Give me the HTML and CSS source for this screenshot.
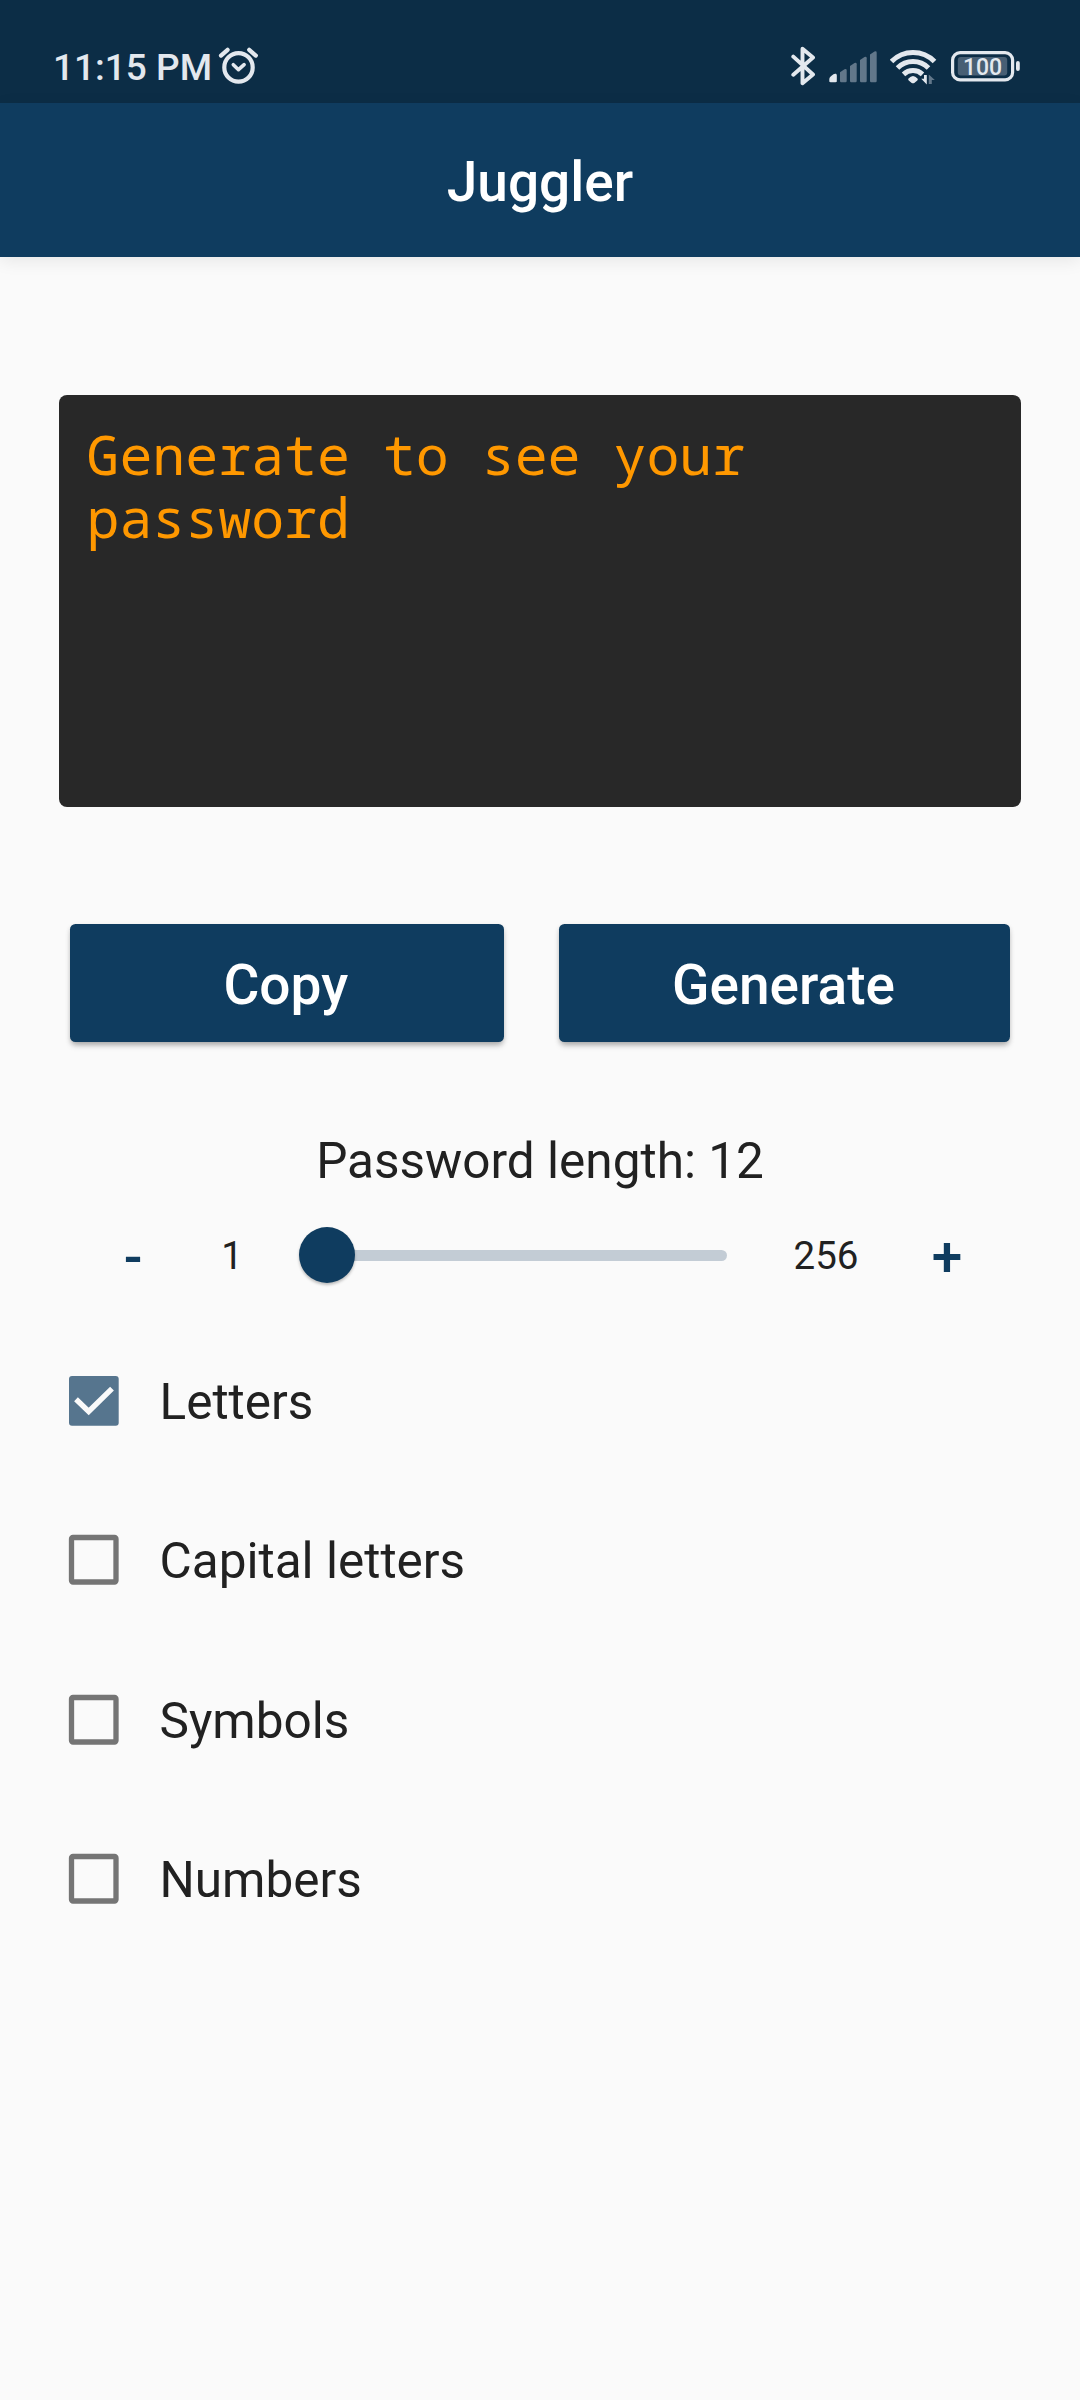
FILE: index.html
```html
<!DOCTYPE html>
<html lang="en">
<head>
<meta charset="utf-8">
<title>Juggler</title>
<link rel="stylesheet" href="styles.css">
</head>
<body>
<div class="status-bar">
  <div class="status-left">
    <span class="clock">11:15 PM</span>
    <svg class="icon" width="40" height="40" viewBox="0 0 40 40">
      <circle cx="20.500" cy="21.400" r="14.200" fill="none" stroke="#e3e8ee" stroke-width="4.200"/>
      <path d="M15.300 18.700l5.200 5 5.600-5" fill="none" stroke="#e3e8ee" stroke-width="3.600" stroke-linecap="round" stroke-linejoin="round"/>
      <path d="M3 9.600l6.600-5.800M31.200 3.800l6.600 5.800" fill="none" stroke="#e3e8ee" stroke-width="4.200" stroke-linecap="round"/>
    </svg>
  </div>
  <div class="status-right">
    <svg class="icon" width="26" height="40" viewBox="0 0 26 40">
      <path d="M2.300 10.600L22 28.500 11.500 37.200V2.800l10.500 8.700L2.300 28.700" fill="none" stroke="#e3e8ee" stroke-width="3.900" stroke-linecap="round" stroke-linejoin="round"/>
    </svg>
    <svg class="icon signal" width="49" height="40" viewBox="0 0 49 40">
      <path d="M.3 35v-2c0-2 4-5 5.800-5.200 1.200-.1 1.700.4 1.700 1.600V35c0 .8-.4 1.200-1.200 1.200H1.500C.7 36.200.3 35.800.3 35z" fill="#e3e8ee"/>
      <g fill="#62778a">
        <path d="M11 26.200l4.500-2.900q2.200-.8 2.200 1.200v10.500q0 1.200-1.200 1.200h-4.300q-1.200 0-1.200-1.200z"/>
        <path d="M21 20l4.500-2.900q2.200-.8 2.200 1.200v16.700q0 1.200-1.200 1.200h-4.300q-1.200 0-1.200-1.200z"/>
        <path d="M31 14l4.500-2.900q2.200-.8 2.200 1.200v22.700q0 1.200-1.200 1.200h-4.300q-1.200 0-1.200-1.200z"/>
        <path d="M41 8.500l4.500-2.900q2.200-.8 2.200 1.200v28.200q0 1.200-1.200 1.200h-4.300q-1.200 0-1.200-1.200z"/>
      </g>
    </svg>
    <svg class="icon wifi" width="48" height="40" viewBox="0 0 48 40">
      <g fill="none" stroke="#e3e8ee" stroke-width="5">
        <path d="M1.500 15.500a30 30 0 0 1 43 0"/>
        <path d="M7.500 22a22 22 0 0 1 31 0"/>
        <path d="M13.500 28.300a14 14 0 0 1 19 0"/>
      </g>
      <path d="M18.500 32.500q4.500-5 9 0 .8 1-.2 2l-3 2.400q-1.300.8-2.600 0l-3-2.400q-1-1-.2-2z" fill="#e3e8ee"/>
      <path d="M36.800 29v9.600l-5.600-5.800h2.800V29z" fill="#e3e8ee"/>
      <path d="M38.800 38V28.500l6 5.500h-3v4z" fill="#62778a"/>
    </svg>
    <svg class="icon battery" width="70" height="40" viewBox="0 0 70 40">
      <rect x="1.600" y="6.600" width="60" height="27.300" rx="7.500" fill="none" stroke="#e3e8ee" stroke-width="3.200"/>
      <rect x="6.800" y="11" width="49.400" height="18.600" rx="3" fill="#485f74"/>
      <rect x="65" y="15" width="3.800" height="10" rx="1.900" fill="#e3e8ee"/>
      <text class="battery-level" x="31.500" y="29" text-anchor="middle">100</text>
    </svg>
  </div>
</div>
<header class="app-bar"><h1>Juggler</h1></header>
<main>
  <div class="output">Generate to see your password</div>
  <div class="actions">
    <button class="button copy">Copy</button>
    <button class="button generate">Generate</button>
  </div>
  <p class="length">Password length: 12</p>
  <div class="length-row">
    <button class="step minus">-</button>
    <span class="bound min">1</span>
    <div class="slider"><div class="thumb"></div></div>
    <span class="bound max">256</span>
    <button class="step plus">+</button>
  </div>
  <ul class="options">
    <li class="option">
      <svg class="box" width="52" height="52" viewBox="0 0 52 52"><rect x="1" y="1" width="49.700" height="49.700" rx="3" fill="#56758e"/><path d="M8 24.200l12.700 12.300L44 13.600" fill="none" stroke="#fafafa" stroke-width="5.400"/></svg>
      <span class="option-label">Letters</span>
    </li>
    <li class="option">
      <svg class="box" width="52" height="52" viewBox="0 0 52 52"><rect x="3.500" y="3.500" width="44.500" height="44.500" rx="1.500" fill="none" stroke="#757575" stroke-width="5.300"/></svg>
      <span class="option-label">Capital letters</span>
    </li>
    <li class="option">
      <svg class="box" width="52" height="52" viewBox="0 0 52 52"><rect x="3.500" y="3.500" width="44.500" height="44.500" rx="1.500" fill="none" stroke="#757575" stroke-width="5.300"/></svg>
      <span class="option-label">Symbols</span>
    </li>
    <li class="option">
      <svg class="box" width="52" height="52" viewBox="0 0 52 52"><rect x="3.500" y="3.500" width="44.500" height="44.500" rx="1.500" fill="none" stroke="#757575" stroke-width="5.300"/></svg>
      <span class="option-label">Numbers</span>
    </li>
  </ul>
</main>
</body>
</html>
```
FILE: styles.css
```css
* { box-sizing: border-box; }

body {
  margin: 0;
  min-height: 2400px;
  background: #fafafa;
  color: #212121;
  font-family: Roboto, sans-serif;
}

button {
  border: 0;
  margin: 0;
  font-family: inherit;
}

.status-bar {
  display: flex;
  justify-content: space-between;
  height: 103px;
  padding: 46px 59px 0 53px;
  background: #0c2d46;
  color: #e3e8ee;
}

.status-left,
.status-right { display: flex; align-items: flex-start; }

.clock {
  width: 165px;
  font-size: 37px;
  font-weight: 500;
  line-height: 44px;
  white-space: nowrap;
}

.icon { display: block; flex: none; }
.signal { margin-left: 12px; }
.wifi { margin-left: 12px; }
.battery { margin-left: 13px; }

.battery-level {
  font-size: 23px;
  font-weight: 500;
  fill: #e3e8ee;
}

.app-bar {
  height: 154px;
  padding-top: 4px;
  background: #0f3c5f;
  color: #fff;
  text-align: center;
  box-shadow: 0 4px 16px rgba(0, 0, 0, .08);
}

.app-bar h1 {
  margin: 0;
  font-size: 55px;
  font-weight: 500;
  line-height: 150px;
}

main { padding: 137.500px 59px 0; }

.output {
  height: 412.500px;
  padding: 27px 27.500px;
  border-radius: 8px;
  background: #282828;
  color: #ff9800;
  font-family: "Droid Sans Mono", "Noto Sans Mono", "DejaVu Sans Mono", monospace;
  font-size: 54.900px;
  line-height: 63px;
}

.actions {
  display: flex;
  gap: 55px;
  padding: 116.500px 11px 0 10.500px;
}

.button {
  height: 118.500px;
  padding: 4px 2px 0 0;
  border-radius: 5.500px;
  background: #0f3c5f;
  color: #fff;
  font-size: 55px;
  font-weight: 500;
  line-height: 114px;
  box-shadow: 0 5px 6px -2px rgba(0, 0, 0, .25), 0 2px 5px rgba(0, 0, 0, .14);
}

.copy { flex: 0 0 434.500px; }
.generate { flex: 1; }

.length {
  margin: 88px 0 0;
  font-size: 49.500px;
  line-height: 62px;
  text-align: center;
}

.length-row {
  display: flex;
  align-items: center;
  height: 126px;
}

.step {
  padding: 4px 0 0;
  background: none;
  color: #0f3c5f;
  font-size: 55px;
  font-weight: 500;
  line-height: 64px;
  text-align: center;
}

.minus { width: 148px; }
.plus { width: 110px; }

.bound {
  padding-top: 1px;
  font-size: 38.500px;
  line-height: 46px;
  text-align: center;
}

.min { width: 50px; }
.max { width: 132px; margin-left: 33px; }

.slider {
  display: flex;
  align-items: center;
  width: 428px;
  height: 11px;
  margin-left: 42px;
  border-radius: 6px;
  background: linear-gradient(#c3ccd5, #c3ccd5) 10px 0 / 418px 11px no-repeat;
}

.thumb {
  width: 56px;
  height: 56px;
  flex: none;
  border-radius: 50%;
  background: #0f3c5f;
  box-shadow: 0 2px 3px rgba(0, 0, 0, .25);
}

.options {
  margin: 0;
  padding: 3px 0 0 8.500px;
  list-style: none;
}

.option {
  display: flex;
  align-items: center;
  gap: 40px;
  height: 159.500px;
  font-size: 49.500px;
  line-height: 60px;
}

.option-label { padding-top: 2px; }

.box { display: block; flex: none; }
```
